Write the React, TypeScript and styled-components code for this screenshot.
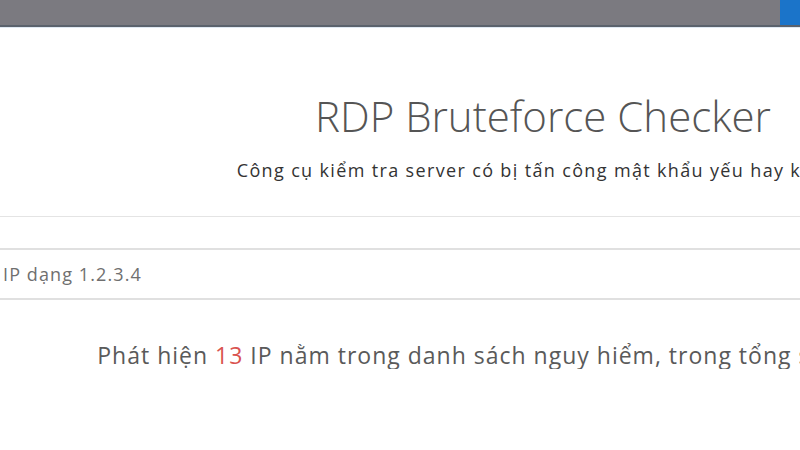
import React from 'react';
import styled, { createGlobalStyle } from 'styled-components';

const GlobalStyle = createGlobalStyle`
  html, body {
    margin: 0;
    padding: 0;
    background: #ffffff;
    overflow: hidden;
  }
  body {
    font-family: "Open Sans", "Noto Sans", "DejaVu Sans", sans-serif;
  }
`;

const TopBar = styled.div`
  display: flex;
  justify-content: space-between;
  height: 25px;
  background: #7b7a80;
  border-bottom: 2px solid #5b626c;
  box-shadow: 0 1px 0 #dfe8f2;
`;

const Corner = styled.div`
  width: 20px;
  background: #1b74c9;
`;

const Page = styled.div`
  width: 1086px;
  display: flex;
  flex-direction: column;
`;

const Hero = styled.header`
  display: flex;
  flex-direction: column;
  align-items: center;
  padding-top: 63px;
  padding-bottom: 35px;
  border-bottom: 1px solid #e4e4e4;
`;

const Title = styled.h1`
  margin: 0;
  font-size: 42px;
  font-weight: 300;
  line-height: 52px;
  color: #555555;
  white-space: nowrap;
`;

const Subtitle = styled.p`
  margin: 17px 0 0;
  font-size: 18px;
  letter-spacing: 1.35px;
  line-height: 22px;
  color: #333333;
  white-space: nowrap;
`;

const SearchRow = styled.div`
  margin-top: 31px;
  margin-left: -12px;
  border-top: 2px solid #e0e0e0;
  border-bottom: 2px solid #e0e0e0;
`;

const SearchInput = styled.input`
  display: block;
  width: 100%;
  height: 48px;
  box-sizing: border-box;
  border: none;
  outline: none;
  padding: 0 15px;
  font-family: inherit;
  font-size: 18px;
  letter-spacing: 1.1px;
  color: #333;
  background: transparent;

  &::placeholder {
    color: #6f6f6f;
  }
`;

const Result = styled.p`
  margin: 41px 0 0;
  text-align: center;
  font-size: 23px;
  letter-spacing: 1px;
  line-height: 28px;
  color: #5a5a5a;
  white-space: nowrap;
`;

const Count = styled.span<{ $danger?: boolean }>`
  color: ${p => (p.$danger ? '#d9534f' : 'inherit')};
`;

export default function App() {
  return (
    <>
      <GlobalStyle />
      <TopBar>
        <span />
        <Corner />
      </TopBar>
      <Page>
        <Hero>
          <Title>RDP Bruteforce Checker</Title>
          <Subtitle>Công cụ kiểm tra server có bị tấn công mật khẩu yếu hay không</Subtitle>
        </Hero>
        <SearchRow>
          <SearchInput placeholder="IP dạng 1.2.3.4" />
        </SearchRow>
        <Result>
          Phát hiện <Count $danger>13</Count> IP nằm trong danh sách nguy hiểm, trong tổng số 10.024.736 IP
        </Result>
      </Page>
    </>
  );
}
